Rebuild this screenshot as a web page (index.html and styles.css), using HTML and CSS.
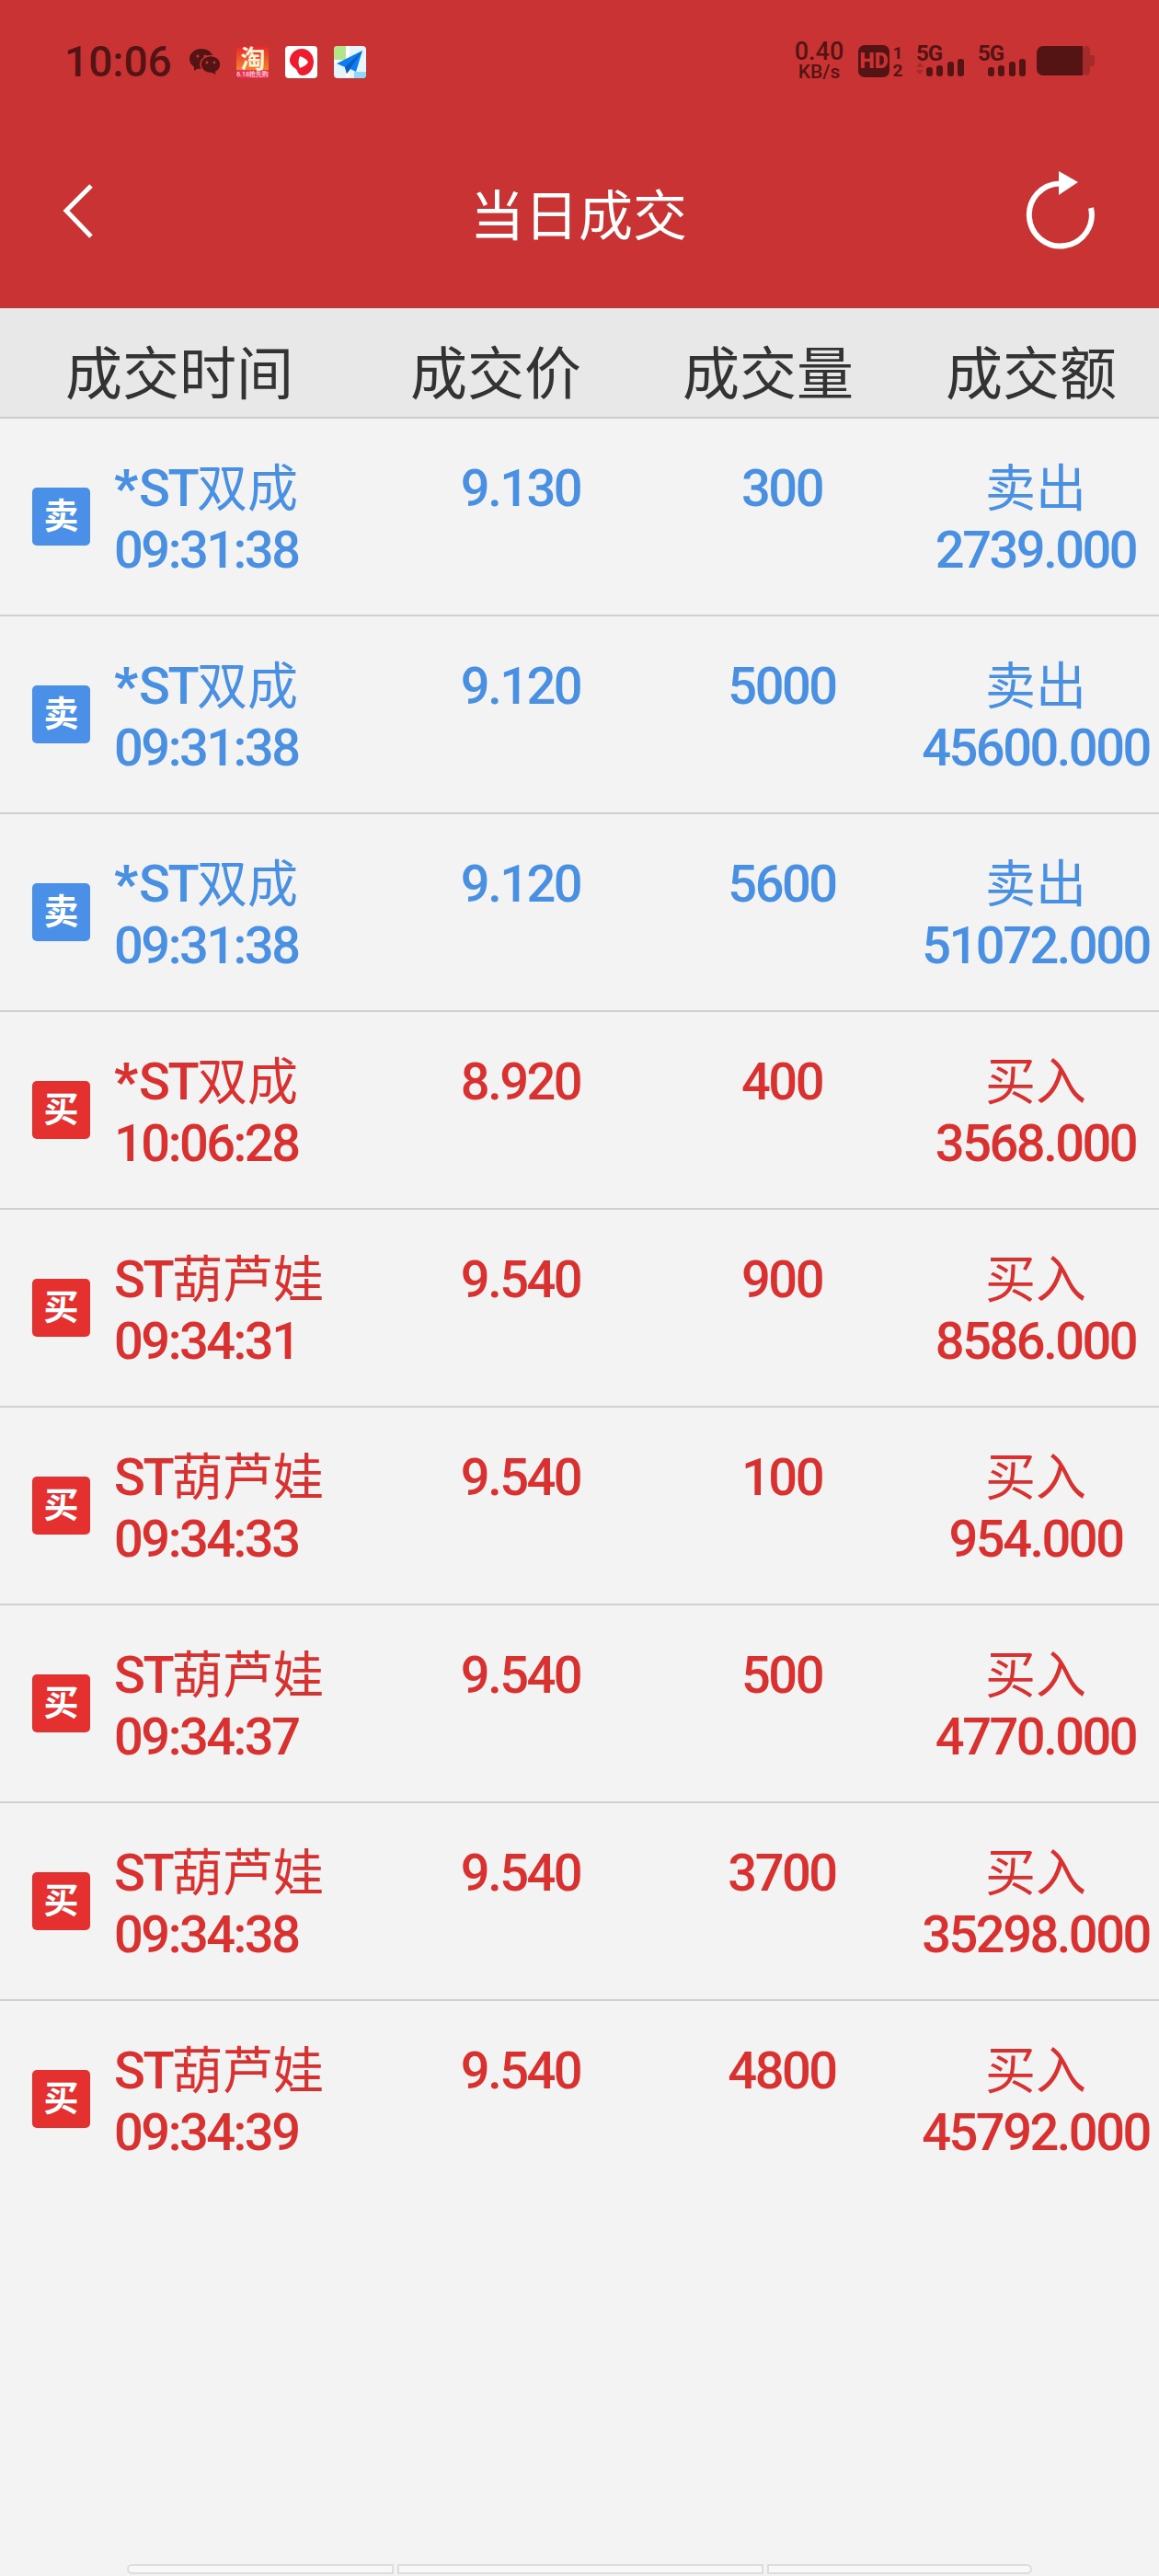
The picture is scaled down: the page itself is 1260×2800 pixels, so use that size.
FILE: index.html
```html
<!DOCTYPE html>
<html lang="zh-CN">
<head>
<meta charset="UTF-8">
<meta name="viewport" content="width=device-width, initial-scale=1.0">
<title>当日成交</title>
<link rel="stylesheet" href="styles.css">
</head>
<body>
<div class="page">
  <header class="top">
    <div class="status">
      <span class="clock">10:06</span>
      <svg class="ic-wechat" width="33" height="28" viewBox="0 0 33 28">
        <ellipse cx="13" cy="11" rx="13" ry="11" fill="#541414"/>
        <path d="M5 18 L5 24 L11 20 Z" fill="#541414"/>
        <ellipse cx="23" cy="17" rx="11" ry="9.6" fill="#541414" stroke="#c93333" stroke-width="1.5"/>
        <path d="M27 24 L29 28 L22 25 Z" fill="#541414"/>
        <circle cx="9" cy="8" r="1.6" fill="#c93333"/>
        <circle cx="17" cy="8" r="1.6" fill="#c93333"/>
        <circle cx="19" cy="15" r="1.4" fill="#c93333"/>
        <circle cx="27" cy="15" r="1.4" fill="#c93333"/>
      </svg>
      <svg class="ic-taobao" width="35" height="35" viewBox="0 0 35 35">
        <defs>
          <linearGradient id="tb" x1="0" y1="0" x2="0" y2="1">
            <stop offset="0" stop-color="#e8262a"/>
            <stop offset="0.7" stop-color="#f0802a"/>
            <stop offset="1" stop-color="#ee3a4a"/>
          </linearGradient>
        </defs>
        <rect width="35" height="35" rx="4" fill="url(#tb)"/>
        <path d="M0 26 H35 V31 A4 4 0 0 1 31 35 H4 A4 4 0 0 1 0 31 Z" fill="#ee2f55"/>
        <text x="18" y="24" class="tb-big">淘</text>
        <text x="17.5" y="33" class="tb-small">6.18抢先购</text>
      </svg>
      <svg class="ic-app" width="35" height="35" viewBox="0 0 35 35">
        <rect width="35" height="35" rx="4" fill="#fff"/>
        <path d="M18 3 C26 3 31 10 31 17 C31 26 25 32 19 32 C16 32 14 30 13 27 C12 24 10 24 8 22 C5 19 4 15 6 11 C8 6 13 3 18 3 Z" fill="#ee1c2e"/>
        <path d="M16 11 C21 13 24 15 25 17.500 C24 20 21 22 16 24 C14 20 14 15 16 11 Z" fill="#fff"/>
      </svg>
      <svg class="ic-app" width="35" height="35" viewBox="0 0 35 35">
        <rect width="35" height="35" rx="4" fill="#e6f5fb"/>
        <path d="M4 0 H13 V15 H0 V4 A4 4 0 0 1 4 0 Z" fill="#b3e68a"/>
        <rect x="13" y="0" width="4" height="35" fill="#fff"/>
        <rect x="0" y="15" width="13" height="4" fill="#fff"/>
        <path d="M22 28 H35 V31 A4 4 0 0 1 31 35 H22 Z" fill="#8fd8fa"/>
        <path d="M31 5 L3 19 L12 23 L14 30 L18 25 L24 28 Z" fill="#0f7df2"/>
        <path d="M31 5 L12 23 L14 30 Z" fill="#0a5fc4"/>
      </svg>
      <div class="status-right">
        <div class="speed">0.40<br>KB/s</div>
        <svg class="ic-hd" width="49" height="45" viewBox="0 -5 49 45">
          <rect width="34" height="35" rx="7" fill="#541414"/>
          <text x="17" y="25" class="hd-text">HD</text>
          <text x="43" y="15" class="sim-text">1</text>
          <text x="43" y="34" class="sim-text">2</text>
        </svg>
        <svg class="ic-signal" width="52" height="44" viewBox="0 -4 52 44">
          <text x="0" y="18" class="g-text">5G</text>
          <path d="M4 20 L8 25 H0 Z M0 28 H8 L4 33 Z" fill="#a52b2b"/>
          <rect x="11" y="25" width="7" height="10" rx="3" fill="#541414"/>
          <rect x="22" y="23" width="7" height="12" rx="3" fill="#541414"/>
          <rect x="34" y="19" width="7" height="16" rx="3" fill="#541414"/>
          <rect x="45" y="16" width="7" height="19" rx="3" fill="#541414"/>
        </svg>
        <svg class="ic-signal" width="52" height="44" viewBox="0 -4 52 44">
          <text x="0" y="18" class="g-text">5G</text>
          <rect x="11" y="25" width="7" height="10" rx="3" fill="#541414"/>
          <rect x="22" y="23" width="7" height="12" rx="3" fill="#541414"/>
          <rect x="34" y="19" width="7" height="16" rx="3" fill="#541414"/>
          <rect x="45" y="16" width="7" height="19" rx="3" fill="#541414"/>
        </svg>
        <svg class="ic-battery" width="63" height="32" viewBox="0 0 63 32">
          <rect x="50" y="0" width="8" height="32" rx="5" fill="#a52b2b"/>
          <path d="M7 0 H50 V32 H7 A7 7 0 0 1 0 25 V7 A7 7 0 0 1 7 0 Z" fill="#541414"/>
          <path d="M57 10 H60 A3 3 0 0 1 63 13 V19 A3 3 0 0 1 60 22 H57 Z" fill="#a52b2b"/>
        </svg>
      </div>
    </div>
    <nav class="nav">
      <svg class="back" width="40" height="64" viewBox="0 0 40 64">
        <path d="M33 5 L6 32 L33 60" fill="none" stroke="#fff" stroke-width="5"/>
      </svg>
      <div class="title">当日成交</div>
      <svg class="refresh" width="80" height="90" viewBox="0 0 80 90">
        <path d="M74 42 A34 34 0 1 1 40 15.500" fill="none" stroke="#fff" stroke-width="6"/>
        <path d="M39 2 L60 14 L39 28 Z" fill="#fff"/>
      </svg>
    </nav>
  </header>

  <div class="thead">
    <div>成交时间</div>
    <div>成交价</div>
    <div>成交量</div>
    <div>成交额</div>
  </div>

  <main class="list">
    <div class="row sell">
      <div class="who"><span class="tag">卖</span><div><span class="star">*</span>ST<span class="cn">双成</span><br>09:31:38</div></div>
      <div class="cell">9.130</div>
      <div class="cell">300</div>
      <div class="cell"><span class="cn">卖出</span><br>2739.000</div>
    </div>
    <div class="row sell">
      <div class="who"><span class="tag">卖</span><div><span class="star">*</span>ST<span class="cn">双成</span><br>09:31:38</div></div>
      <div class="cell">9.120</div>
      <div class="cell">5000</div>
      <div class="cell"><span class="cn">卖出</span><br>45600.000</div>
    </div>
    <div class="row sell">
      <div class="who"><span class="tag">卖</span><div><span class="star">*</span>ST<span class="cn">双成</span><br>09:31:38</div></div>
      <div class="cell">9.120</div>
      <div class="cell">5600</div>
      <div class="cell"><span class="cn">卖出</span><br>51072.000</div>
    </div>
    <div class="row buy">
      <div class="who"><span class="tag">买</span><div><span class="star">*</span>ST<span class="cn">双成</span><br>10:06:28</div></div>
      <div class="cell">8.920</div>
      <div class="cell">400</div>
      <div class="cell"><span class="cn">买入</span><br>3568.000</div>
    </div>
    <div class="row buy">
      <div class="who"><span class="tag">买</span><div>ST<span class="cn">葫芦娃</span><br>09:34:31</div></div>
      <div class="cell">9.540</div>
      <div class="cell">900</div>
      <div class="cell"><span class="cn">买入</span><br>8586.000</div>
    </div>
    <div class="row buy">
      <div class="who"><span class="tag">买</span><div>ST<span class="cn">葫芦娃</span><br>09:34:33</div></div>
      <div class="cell">9.540</div>
      <div class="cell">100</div>
      <div class="cell"><span class="cn">买入</span><br>954.000</div>
    </div>
    <div class="row buy">
      <div class="who"><span class="tag">买</span><div>ST<span class="cn">葫芦娃</span><br>09:34:37</div></div>
      <div class="cell">9.540</div>
      <div class="cell">500</div>
      <div class="cell"><span class="cn">买入</span><br>4770.000</div>
    </div>
    <div class="row buy">
      <div class="who"><span class="tag">买</span><div>ST<span class="cn">葫芦娃</span><br>09:34:38</div></div>
      <div class="cell">9.540</div>
      <div class="cell">3700</div>
      <div class="cell"><span class="cn">买入</span><br>35298.000</div>
    </div>
    <div class="row buy">
      <div class="who"><span class="tag">买</span><div>ST<span class="cn">葫芦娃</span><br>09:34:39</div></div>
      <div class="cell">9.540</div>
      <div class="cell">4800</div>
      <div class="cell"><span class="cn">买入</span><br>45792.000</div>
    </div>
  </main>

  <div class="handle">
    <span></span>
    <span></span>
    <span></span>
  </div>
</div>
</body>
</html>
```

FILE: styles.css
```css
* {
  box-sizing: border-box;
}
body {
  margin: 0;
  background-color: #f3f3f3;
  font-family: Roboto, "Noto Sans CJK SC", sans-serif;
}
.page {
  display: flex;
  flex-direction: column;
  height: 2800px;
  overflow: hidden;
}

/* red top part */
.top {
  height: 335px;
  background-color: #c93333;
  color: #fff;
}
.status {
  display: flex;
  align-items: center;
  height: 130px;
  padding: 4px 70px 0 70px;
  color: #541414;
}
.clock {
  width: 115px;
  margin-right: 21px;
  font-size: 46px;
  font-weight: 500;
  line-height: 1;
  white-space: nowrap;
}
.ic-wechat {
  margin-right: 18px;
}
.ic-taobao,
.ic-app {
  margin-right: 18px;
}
.tb-big {
  font-size: 27px;
  font-weight: 700;
  fill: #fff3d8;
  text-anchor: middle;
}
.tb-small {
  font-size: 7px;
  fill: #ffe;
  text-anchor: middle;
}
.status-right {
  display: flex;
  align-items: center;
  margin-left: auto;
  margin-top: -2px;
}
.speed {
  width: 55px;
  margin-right: 15px;
  font-size: 21px;
  font-weight: 500;
  line-height: 20px;
  text-align: center;
  white-space: nowrap;
}
.speed::first-line {
  font-size: 27px;
  line-height: 24px;
}
.ic-hd {
  margin-right: 14px;
}
.hd-text {
  font-size: 23px;
  font-weight: 900;
  fill: #c93333;
  text-anchor: middle;
}
.sim-text {
  font-size: 19px;
  font-weight: 700;
  fill: #541414;
  text-anchor: middle;
}
.g-text {
  font-size: 24px;
  font-weight: 700;
  letter-spacing: -1px;
  fill: #541414;
}
.ic-signal {
  margin-right: 15px;
}
.ic-signal + .ic-battery {
  margin-left: -3px;
}
.nav {
  display: flex;
  align-items: center;
  justify-content: space-between;
  height: 205px;
  padding: 0 68px 0 66px;
}
.back {
  flex: none;
  margin-bottom: 8px;
}
.title {
  margin-top: 5px;
  margin-left: 40px;
  font-size: 59px;
  line-height: 1;
}
.refresh {
  flex: none;
  margin-bottom: 8px;
}

/* table */
.thead {
  display: grid;
  grid-template-columns: 390px 298px 294px 1fr;
  align-items: center;
  height: 120px;
  padding-top: 15px;
  background-color: #e8e8e8;
  border-bottom: 2px solid #ccc;
  color: #333;
  font-size: 62px;
  text-align: center;
}
.list {
  flex: 1;
}
.row {
  display: grid;
  grid-template-columns: 424px 284px 284px 268px;
  height: 215px;
  padding-top: 43px;
  border-bottom: 2px solid #d0d0d0;
  font-size: 56px;
  font-weight: 500;
  line-height: 67px;
  letter-spacing: -2.5px;
  white-space: nowrap;
}
.row:last-child {
  border-bottom: none;
}
.sell {
  color: #4a90e2;
}
.buy {
  color: #d93030;
}
.who {
  display: flex;
  align-items: flex-start;
  gap: 26px;
  padding-left: 35px;
}
.tag {
  width: 63px;
  height: 63px;
  margin-top: 32px;
  border-radius: 5px;
  color: #fff;
  font-size: 38px;
  font-weight: 700;
  line-height: 63px;
  letter-spacing: 0;
  text-align: center;
}
.cn {
  font-size: 55px;
  font-weight: 400;
  letter-spacing: 0;
}
.star {
  font-weight: 900;
  letter-spacing: 1px;
}
.sell .tag {
  background-color: #4a90e8;
}
.buy .tag {
  background-color: #e53030;
}
.cell {
  text-align: center;
}

/* gesture bar at the very bottom */
.handle {
  display: flex;
  gap: 4px;
  justify-content: center;
  height: 13px;
}
.handle span {
  height: 11px;
  background-color: #f8f8f8;
  border: 2px solid #ddd;
}
.handle span:nth-child(1) {
  width: 290px;
  border-radius: 6px 0 0 6px;
}
.handle span:nth-child(2) {
  width: 398px;
}
.handle span:nth-child(3) {
  width: 288px;
  border-radius: 0 6px 6px 0;
}
```
